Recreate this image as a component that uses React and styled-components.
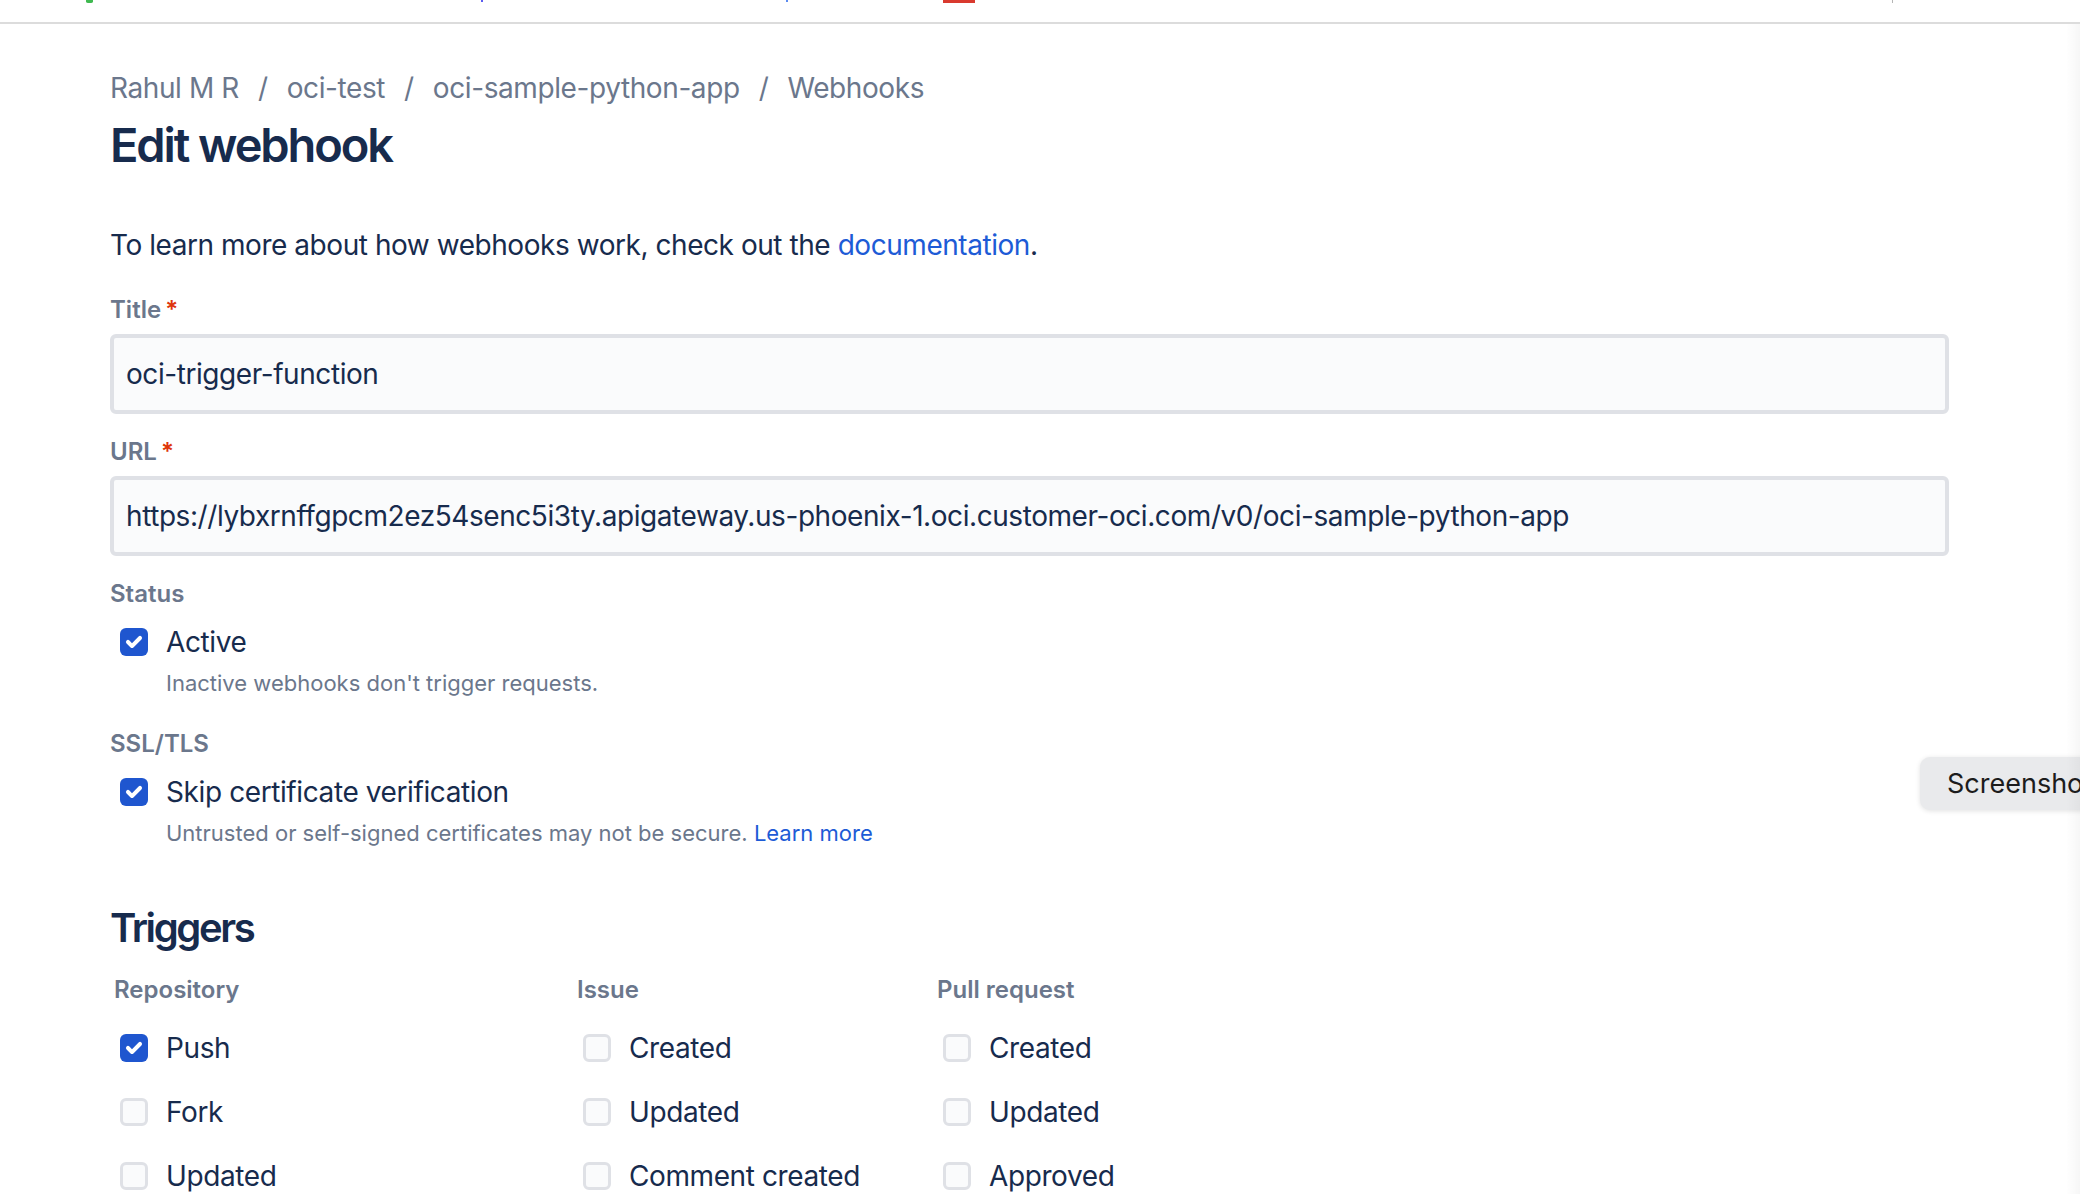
import React from "react";
import styled, { createGlobalStyle } from "styled-components";

const GlobalStyle = createGlobalStyle`
  html, body {
    margin: 0;
    padding: 0;
    background: #ffffff;
    overflow: hidden;
  }
  body {
    font-family: Inter, "Noto Sans", "Liberation Sans", sans-serif;
    color: #172b4d;
  }
`;

const Screen = styled.div`
  width: 2080px;
  height: 1194px;
  position: relative;
  overflow: hidden;
`;

const TopBar = styled.div`
  height: 22px;
  display: flex;
  align-items: flex-start;
  border-bottom: 2px solid #dcdcdc;
`;

const Mark = styled.span`
  display: block;
  flex: none;
  margin-left: ${(p) => p.$left}px;
  width: ${(p) => p.$w}px;
  height: ${(p) => p.$h || 2}px;
  background: ${(p) => p.$color};
  border-radius: ${(p) => (p.$round ? "0 0 50% 50%" : "0")};
`;

const Page = styled.main`
  width: 1839px;
  padding-left: 110px;
`;

const Breadcrumbs = styled.nav`
  margin-top: 44px;
  display: flex;
  align-items: center;
  font-size: 28px;
  line-height: 40px;
  letter-spacing: -0.4px;
  color: #6b778c;
`;

const Crumb = styled.span`
  white-space: nowrap;
`;

const Sep = styled.span`
  padding: 0 19px;
`;

const Heading = styled.h1`
  margin: 9px 0 0;
  font-size: 47px;
  line-height: 56px;
  font-weight: 600;
  letter-spacing: -2.1px;
  color: #172b4d;
`;

const Intro = styled.p`
  margin: 52px 0 0;
  font-size: 28px;
  line-height: 40px;
  letter-spacing: -0.45px;
  color: #172b4d;
`;

const Link = styled.a`
  color: #1d5bd6;
  text-decoration: none;
`;

const Label = styled.div`
  margin-top: ${(p) => p.$top}px;
  font-size: 24px;
  line-height: 32px;
  font-weight: 600;
  color: #6b778c;
`;

const Required = styled.span`
  color: #de350b;
  margin-left: 4px;
`;

const TextInput = styled.div`
  margin-top: 8px;
  box-sizing: border-box;
  height: 80px;
  display: flex;
  align-items: center;
  padding: 0 12px;
  background: #fafbfc;
  border: 4px solid #dfe1e6;
  border-radius: 6px;
  font-size: 28px;
  letter-spacing: -0.43px;
  color: #172b4d;
  white-space: nowrap;
  overflow: hidden;
`;

const CheckRow = styled.label`
  margin-top: ${(p) => p.$top || 0}px;
  height: 40px;
  display: flex;
  align-items: center;
  gap: 18px;
  padding-left: ${(p) => p.$indent ?? 10}px;
  font-size: 28px;
  letter-spacing: -0.4px;
  color: #172b4d;
  white-space: nowrap;
`;

const Box = styled.span`
  flex: none;
  box-sizing: border-box;
  width: 28px;
  height: 28px;
  border-radius: 6px;
  display: flex;
  align-items: center;
  justify-content: center;
  background: ${(p) => (p.$on ? "#1f56cf" : "#fafbfc")};
  border: ${(p) => (p.$on ? "none" : "3px solid #dfe1e6")};
`;

const Helper = styled.div`
  margin-top: 5px;
  padding-left: 56px;
  font-size: 22px;
  line-height: 32px;
  color: #6b778c;
`;

const SubHeading = styled.h2`
  margin: 55px 0 0;
  font-size: 40px;
  line-height: 48px;
  font-weight: 600;
  letter-spacing: -2.4px;
  color: #172b4d;
`;

const TriggerGrid = styled.div`
  margin-top: 22px;
  padding-left: 4px;
  display: grid;
  grid-template-columns: 463px 360px 1fr;
`;

const Column = styled.div`
  display: flex;
  flex-direction: column;
  gap: 24px;
`;

const ColumnTitle = styled.div`
  font-size: 24px;
  line-height: 32px;
  font-weight: 600;
  color: #6b778c;
  margin-bottom: -2px;
`;

const ScreenshotTab = styled.div`
  position: absolute;
  left: 1920px;
  top: 757px;
  height: 53px;
  width: 220px;
  box-sizing: border-box;
  padding-left: 27px;
  display: flex;
  align-items: center;
  background: #e9eaec;
  border-radius: 10px;
  box-shadow: 0 1px 5px rgba(0, 0, 0, 0.12);
  font-family: Inter, "Liberation Sans", sans-serif;
  font-size: 27px;
  color: #1c1c1c;
`;

const EdgeShade = styled.div`
  position: absolute;
  right: 0;
  top: 24px;
  bottom: 0;
  width: 14px;
  background: linear-gradient(to right, rgba(0, 0, 0, 0), rgba(0, 0, 0, 0.035));
`;

function Check({ on }) {
  return (
    <Box $on={on}>
      {on && (
        <svg width="24" height="24" viewBox="6 6 12 12" aria-hidden="true">
          <path
            fill="#ffffff"
            d="M9.707 11.293a1 1 0 1 0-1.414 1.414l2 2a1 1 0 0 0 1.414 0l4-4a1 1 0 1 0-1.414-1.414L11 12.586l-1.293-1.293z"
          />
        </svg>
      )}
    </Box>
  );
}

const triggers = [
  {
    title: "Repository",
    items: [
      { name: "Push", on: true },
      { name: "Fork" },
      { name: "Updated" },
    ],
  },
  {
    title: "Issue",
    items: [{ name: "Created" }, { name: "Updated" }, { name: "Comment created" }],
  },
  {
    title: "Pull request",
    items: [{ name: "Created" }, { name: "Updated" }, { name: "Approved" }],
  },
];

export default function App() {
  const crumbs = ["Rahul M R", "oci-test", "oci-sample-python-app", "Webhooks"];

  return (
    <Screen>
      <GlobalStyle />
      <TopBar>
        <Mark $left={86} $w={7} $h={3} $color="#3fb950" $round />
        <Mark $left={388} $w={2} $color="#5b5bf0" />
        <Mark $left={303} $w={2} $color="#5b8bf0" />
        <Mark $left={155} $w={32} $h={3} $color="#d93a2f" />
        <Mark $left={917} $w={1} $h={3} $color="#b5b5b5" />
      </TopBar>

      <Page>
        <Breadcrumbs>
          {crumbs.map((c, i) => (
            <React.Fragment key={c}>
              {i > 0 && <Sep>/</Sep>}
              <Crumb>{c}</Crumb>
            </React.Fragment>
          ))}
        </Breadcrumbs>
        <Heading>Edit webhook</Heading>

        <Intro>
          To learn more about how webhooks work, check out the{" "}
          <Link href="#">documentation</Link>.
        </Intro>

        <Label $top={29}>
          Title<Required>*</Required>
        </Label>
        <TextInput>oci-trigger-function</TextInput>

        <Label $top={22}>
          URL<Required>*</Required>
        </Label>
        <TextInput>
          https://lybxrnffgpcm2ez54senc5i3ty.apigateway.us-phoenix-1.oci.customer-oci.com/v0/oci-sample-python-app
        </TextInput>

        <Label $top={22}>Status</Label>
        <CheckRow $top={12}>
          <Check on />
          Active
        </CheckRow>
        <Helper>Inactive webhooks don't trigger requests.</Helper>

        <Label $top={29}>SSL/TLS</Label>
        <CheckRow $top={12}>
          <Check on />
          Skip certificate verification
        </CheckRow>
        <Helper>
          Untrusted or self-signed certificates may not be secure.{" "}
          <Link href="#">Learn more</Link>
        </Helper>

        <SubHeading>Triggers</SubHeading>
        <TriggerGrid>
          {triggers.map((col) => (
            <Column key={col.title}>
              <ColumnTitle>{col.title}</ColumnTitle>
              {col.items.map((it) => (
                <CheckRow key={it.name} $indent={6}>
                  <Check on={it.on} />
                  {it.name}
                </CheckRow>
              ))}
            </Column>
          ))}
        </TriggerGrid>
      </Page>

      <ScreenshotTab>Screenshot</ScreenshotTab>
      <EdgeShade />
    </Screen>
  );
}
